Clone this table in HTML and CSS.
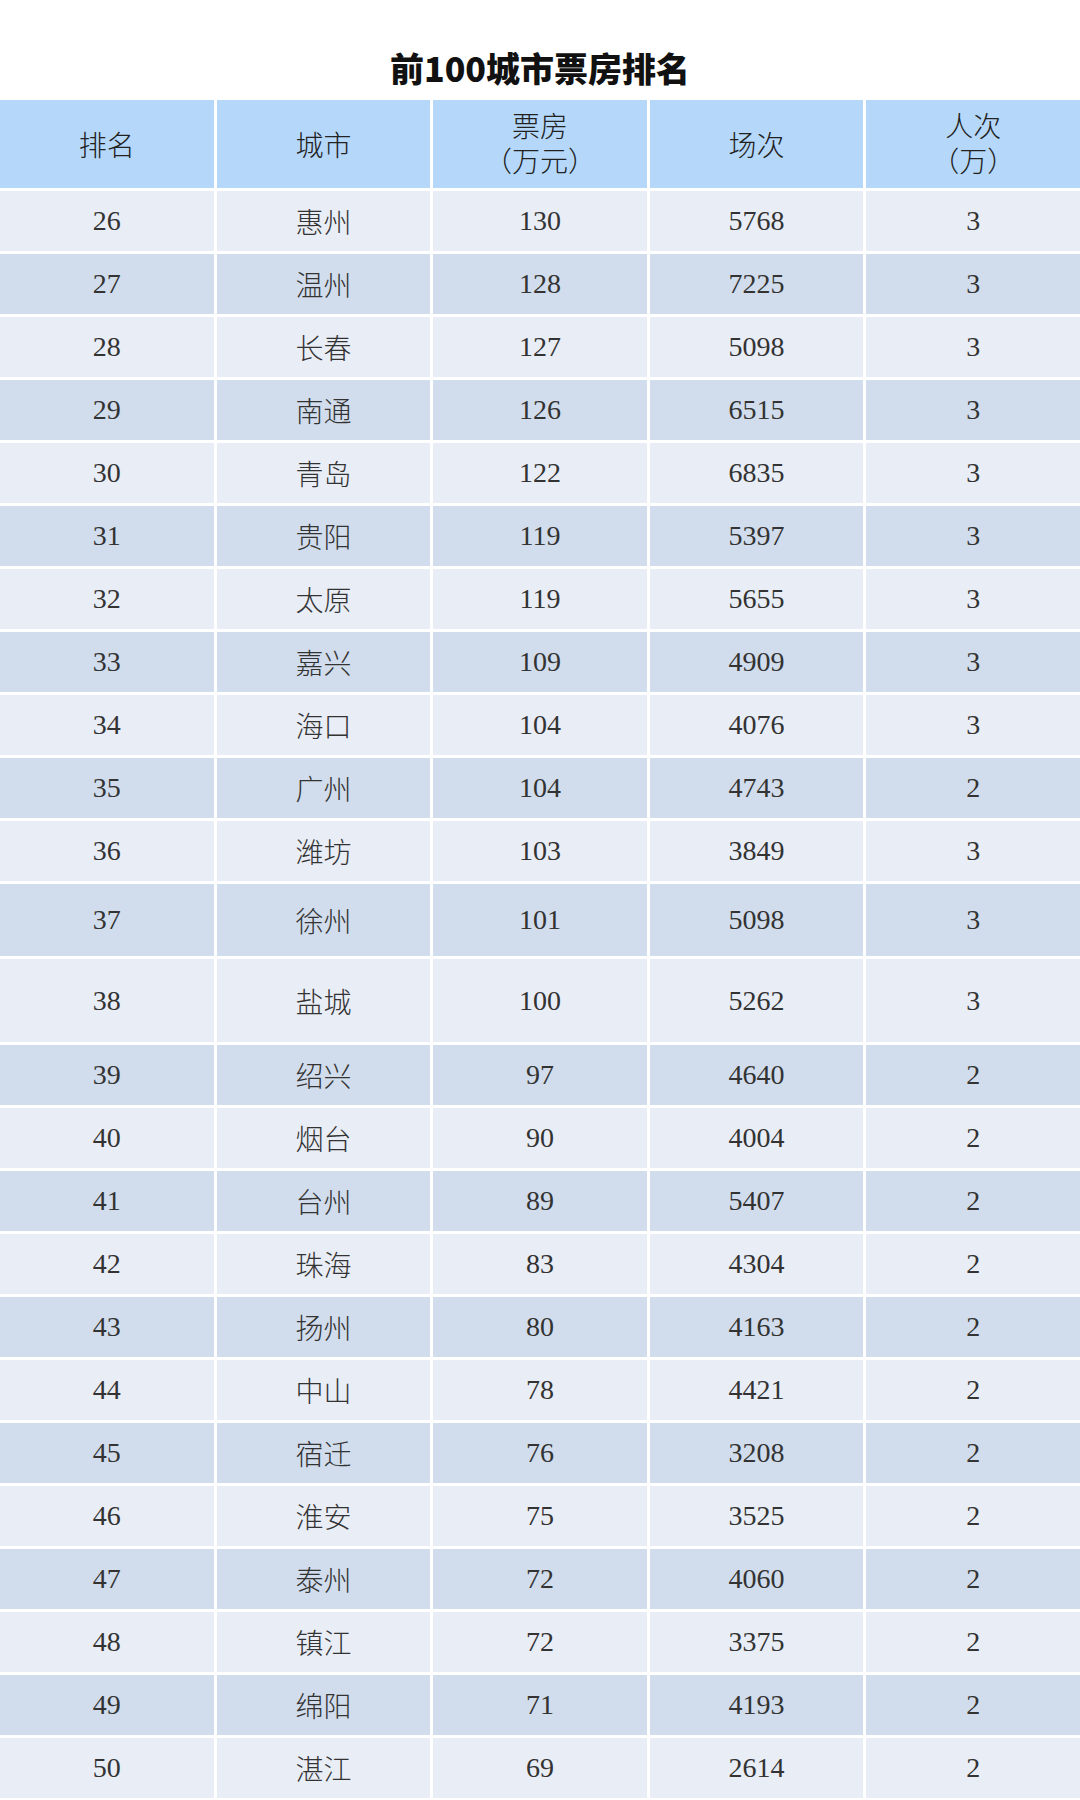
FILE: index.html
```html
<!DOCTYPE html>
<html lang="zh-CN">
<head>
<meta charset="utf-8">
<title>前100城市票房排名</title>
<link rel="stylesheet" href="styles.css">
</head>
<body>
<h1 class="title">前100城市票房排名</h1>
<div class="table">
  <div class="row head">
    <div class="cell">排名</div>
    <div class="cell">城市</div>
    <div class="cell two">票房<br>（万元）</div>
    <div class="cell">场次</div>
    <div class="cell two">人次<br>（万）</div>
  </div>
  <div class="row odd"><div class="cell">26</div><div class="cell">惠州</div><div class="cell">130</div><div class="cell">5768</div><div class="cell">3</div></div>
  <div class="row even"><div class="cell">27</div><div class="cell">温州</div><div class="cell">128</div><div class="cell">7225</div><div class="cell">3</div></div>
  <div class="row odd"><div class="cell">28</div><div class="cell">长春</div><div class="cell">127</div><div class="cell">5098</div><div class="cell">3</div></div>
  <div class="row even"><div class="cell">29</div><div class="cell">南通</div><div class="cell">126</div><div class="cell">6515</div><div class="cell">3</div></div>
  <div class="row odd"><div class="cell">30</div><div class="cell">青岛</div><div class="cell">122</div><div class="cell">6835</div><div class="cell">3</div></div>
  <div class="row even"><div class="cell">31</div><div class="cell">贵阳</div><div class="cell">119</div><div class="cell">5397</div><div class="cell">3</div></div>
  <div class="row odd"><div class="cell">32</div><div class="cell">太原</div><div class="cell">119</div><div class="cell">5655</div><div class="cell">3</div></div>
  <div class="row even"><div class="cell">33</div><div class="cell">嘉兴</div><div class="cell">109</div><div class="cell">4909</div><div class="cell">3</div></div>
  <div class="row odd"><div class="cell">34</div><div class="cell">海口</div><div class="cell">104</div><div class="cell">4076</div><div class="cell">3</div></div>
  <div class="row even"><div class="cell">35</div><div class="cell">广州</div><div class="cell">104</div><div class="cell">4743</div><div class="cell">2</div></div>
  <div class="row odd"><div class="cell">36</div><div class="cell">潍坊</div><div class="cell">103</div><div class="cell">3849</div><div class="cell">3</div></div>
  <div class="row even tall"><div class="cell">37</div><div class="cell">徐州</div><div class="cell">101</div><div class="cell">5098</div><div class="cell">3</div></div>
  <div class="row odd taller"><div class="cell">38</div><div class="cell">盐城</div><div class="cell">100</div><div class="cell">5262</div><div class="cell">3</div></div>
  <div class="row even"><div class="cell">39</div><div class="cell">绍兴</div><div class="cell">97</div><div class="cell">4640</div><div class="cell">2</div></div>
  <div class="row odd"><div class="cell">40</div><div class="cell">烟台</div><div class="cell">90</div><div class="cell">4004</div><div class="cell">2</div></div>
  <div class="row even"><div class="cell">41</div><div class="cell">台州</div><div class="cell">89</div><div class="cell">5407</div><div class="cell">2</div></div>
  <div class="row odd"><div class="cell">42</div><div class="cell">珠海</div><div class="cell">83</div><div class="cell">4304</div><div class="cell">2</div></div>
  <div class="row even"><div class="cell">43</div><div class="cell">扬州</div><div class="cell">80</div><div class="cell">4163</div><div class="cell">2</div></div>
  <div class="row odd"><div class="cell">44</div><div class="cell">中山</div><div class="cell">78</div><div class="cell">4421</div><div class="cell">2</div></div>
  <div class="row even"><div class="cell">45</div><div class="cell">宿迁</div><div class="cell">76</div><div class="cell">3208</div><div class="cell">2</div></div>
  <div class="row odd"><div class="cell">46</div><div class="cell">淮安</div><div class="cell">75</div><div class="cell">3525</div><div class="cell">2</div></div>
  <div class="row even"><div class="cell">47</div><div class="cell">泰州</div><div class="cell">72</div><div class="cell">4060</div><div class="cell">2</div></div>
  <div class="row odd"><div class="cell">48</div><div class="cell">镇江</div><div class="cell">72</div><div class="cell">3375</div><div class="cell">2</div></div>
  <div class="row even"><div class="cell">49</div><div class="cell">绵阳</div><div class="cell">71</div><div class="cell">4193</div><div class="cell">2</div></div>
  <div class="row odd"><div class="cell">50</div><div class="cell">湛江</div><div class="cell">69</div><div class="cell">2614</div><div class="cell">2</div></div>
</div>
</body>
</html>
```

FILE: styles.css
```css
html, body {
  margin: 0;
  padding: 0;
  background: #ffffff;
}

body {
  width: 1080px;
}

.title {
  margin: 0;
  padding-top: 51px;
  height: 49px;
  font-family: "Noto Sans CJK SC", "Noto Sans", sans-serif;
  font-size: 34px;
  line-height: 34px;
  font-weight: 900;
  color: #111111;
  text-align: center;
}

.table {
  display: flex;
  flex-direction: column;
  gap: 3px;
  font-family: "Liberation Serif", "Noto Sans CJK SC", serif;
}

.row {
  display: grid;
  grid-template-columns: repeat(5, 1fr);
  column-gap: 3px;
  height: 60px;
}

.row.head {
  height: 88px;
}

.row.tall {
  height: 72px;
}

.row.taller {
  height: 83px;
}

.cell {
  display: flex;
  align-items: center;
  justify-content: center;
  text-align: center;
  font-size: 28px;
  font-weight: 300;
  color: #333333;
}

.head .cell {
  background: #b5d8fa;
  color: #222222;
}

.head .cell.two {
  line-height: 35px;
  padding-top: 2px;
}

.odd .cell {
  background: #e9edf6;
}

.even .cell {
  background: #d1ddec;
}
```
